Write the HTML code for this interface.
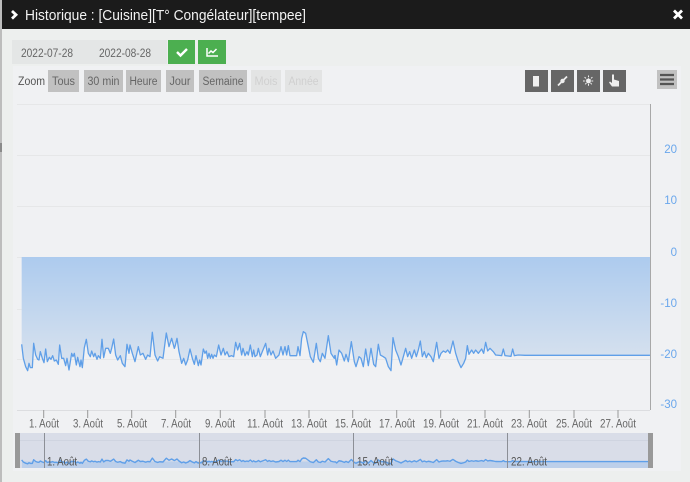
<!DOCTYPE html>
<html lang="fr">
<head>
<meta charset="utf-8">
<title>Historique</title>
<style>
html,body{margin:0;padding:0;width:690px;height:482px;overflow:hidden;background:#edefee}
svg{display:block}
text{font-family:"Liberation Sans",sans-serif}
</style>
</head>
<body>
<svg width="690" height="482" viewBox="0 0 690 482" xmlns="http://www.w3.org/2000/svg">
<defs>
<linearGradient id="g" gradientUnits="userSpaceOnUse" x1="0" y1="-204" x2="0" y2="120">
<stop offset="0" stop-color="#adcbee"/><stop offset="1" stop-color="#d8e2ee"/>
</linearGradient>
<g id="ln" fill="none" stroke="#5f9fe8" stroke-linejoin="round">
<polyline vector-effect="non-scaling-stroke" transform="translate(15,325) scale(.3333)" points="20,58 25,100 32,125 38,137 42,115 46,128 52,128 56,55 62,90 68,103 72,105 76,80 82,100 87,113 92,72 97,110 103,97 108,103 113,92 118,108 124,105 130,118 134,60 140,100 146,100 152,122 156,100 162,135 170,85 174,95 178,85 184,120 188,97 195,125 198,105 202,128 208,68 214,43 220,85 226,95 230,78 236,95 240,85 246,103 250,92 256,100 261,43 266,98 272,70 280,70 286,85 290,70 296,42 302,90 308,105 316,92 322,115 330,125 336,58 342,85 345,60 352,85 360,110 370,65 376,90 384,85 392,103 398,90 405,95 412,22 420,90 428,108 434,95 444,100 454,24 462,65 470,40 478,70 480,65"/>
<polyline vector-effect="non-scaling-stroke" transform="translate(175,325) scale(.3333)" points="0,65 6,40 12,80 20,115 26,100 32,120 38,105 45,72 52,100 58,118 63,92 70,122 74,105 78,120 85,72 90,85 94,78 98,100 102,85 106,100 110,88 114,100 118,90 124,95 131,60 138,90 145,70 150,90 156,80 162,95 170,92 176,95 182,52 188,75 194,55 200,90 204,70 210,92 216,80 220,90 226,60 232,95 236,75 240,95 246,90 250,70 256,95 262,80 272,55 278,90 282,70 288,90 294,78 302,100 312,90 318,65 324,90 330,65 335,90 340,62 345,92 365,92 369,65 375,92 380,40 385,20 392,25 400,65 406,95 415,112 424,55 430,100 436,110 442,85 450,100 460,32 468,85 478,100 480,90"/>
<polyline vector-effect="non-scaling-stroke" transform="translate(335,325) scale(.3333)" points="0,90 5,120 12,75 20,85 28,108 33,88 40,110 49,50 58,110 63,125 72,95 78,100 85,125 92,72 100,122 108,70 116,118 122,125 130,58 136,90 145,95 152,100 160,125 168,137 174,38 182,75 190,95 198,120 205,95 212,70 218,95 224,80 230,100 238,75 244,95 250,75 256,48 262,95 268,80 274,98 280,85 288,95 295,110 305,52 312,100 318,85 325,78 332,82 338,75 345,85 354,48 362,85 370,110 378,128 386,115 392,100 397,62 402,88 410,75 416,85 422,75 430,85 440,72 446,85 452,52 458,78 465,70 475,80 482,90 500,92 505,72 510,92 528,94 533,72 538,92 550,90 570,91 945,91"/>
</g>
<g id="ar" fill="url(#g)">
<polygon transform="translate(15,325) scale(.3333)" points="20,-204 20,58 25,100 32,125 38,137 42,115 46,128 52,128 56,55 62,90 68,103 72,105 76,80 82,100 87,113 92,72 97,110 103,97 108,103 113,92 118,108 124,105 130,118 134,60 140,100 146,100 152,122 156,100 162,135 170,85 174,95 178,85 184,120 188,97 195,125 198,105 202,128 208,68 214,43 220,85 226,95 230,78 236,95 240,85 246,103 250,92 256,100 261,43 266,98 272,70 280,70 286,85 290,70 296,42 302,90 308,105 316,92 322,115 330,125 336,58 342,85 345,60 352,85 360,110 370,65 376,90 384,85 392,103 398,90 405,95 412,22 420,90 428,108 434,95 444,100 454,24 462,65 470,40 478,70 480,65 481,-204"/>
<polygon transform="translate(175,325) scale(.3333)" points="0,-204 0,65 6,40 12,80 20,115 26,100 32,120 38,105 45,72 52,100 58,118 63,92 70,122 74,105 78,120 85,72 90,85 94,78 98,100 102,85 106,100 110,88 114,100 118,90 124,95 131,60 138,90 145,70 150,90 156,80 162,95 170,92 176,95 182,52 188,75 194,55 200,90 204,70 210,92 216,80 220,90 226,60 232,95 236,75 240,95 246,90 250,70 256,95 262,80 272,55 278,90 282,70 288,90 294,78 302,100 312,90 318,65 324,90 330,65 335,90 340,62 345,92 365,92 369,65 375,92 380,40 385,20 392,25 400,65 406,95 415,112 424,55 430,100 436,110 442,85 450,100 460,32 468,85 478,100 480,90 481,-204"/>
<polygon transform="translate(335,325) scale(.3333)" points="0,-204 0,90 5,120 12,75 20,85 28,108 33,88 40,110 49,50 58,110 63,125 72,95 78,100 85,125 92,72 100,122 108,70 116,118 122,125 130,58 136,90 145,95 152,100 160,125 168,137 174,38 182,75 190,95 198,120 205,95 212,70 218,95 224,80 230,100 238,75 244,95 250,75 256,48 262,95 268,80 274,98 280,85 288,95 295,110 305,52 312,100 318,85 325,78 332,82 338,75 345,85 354,48 362,85 370,110 378,128 386,115 392,100 397,62 402,88 410,75 416,85 422,75 430,85 440,72 446,85 452,52 458,78 465,70 475,80 482,90 500,92 505,72 510,92 528,94 533,72 538,92 550,90 570,91 945,91 945,-204"/>
</g>
<clipPath id="nv"><rect x="20" y="433" width="628" height="35"/></clipPath>
</defs>

<rect width="690" height="482" fill="#edefee"/>
<rect x="0" y="0" width="2" height="482" fill="#bdbdbd"/>
<rect x="0" y="143" width="2" height="9" fill="#8a8a8a"/>
<rect x="2" y="0" width="688" height="29" fill="#1b1b1b"/>
<path d="M12 11l4 3.800-4 3.800" fill="none" stroke="#fff" stroke-width="2.800"/>
<text x="25" y="20" font-size="15" fill="#f2f2f2" textLength="281" lengthAdjust="spacingAndGlyphs">Historique : [Cuisine][T° Congélateur][tempee]</text>
<path d="M674 10.500l8 8M682 10.500l-8 8" stroke="#fff" stroke-width="2.800"/>

<rect x="12" y="40" width="155" height="24" fill="#e4e6e6"/>
<text x="21" y="57" font-size="11.500" fill="#666" textLength="52" lengthAdjust="spacingAndGlyphs">2022-07-28</text>
<text x="99" y="57" font-size="11.500" fill="#666" textLength="52" lengthAdjust="spacingAndGlyphs">2022-08-28</text>
<rect x="168" y="40" width="27" height="24" fill="#4caf50"/>
<path d="M177 52l3.500 3.500 6.500-6.500" fill="none" stroke="#fff" stroke-width="2.400"/>
<rect x="198" y="40" width="28" height="24" fill="#4caf50"/>
<path d="M207 48v8h11M208.500 53.500l2.500-2.500 2 1.500 3.500-3.500" fill="none" stroke="#fff" stroke-width="1.500"/>

<rect x="13" y="66" width="668" height="405" fill="#f0f1f3"/>

<text x="18" y="85" font-size="11.500" fill="#555" textLength="27" lengthAdjust="spacingAndGlyphs">Zoom</text>
<g font-size="11.500" fill="#666">
<rect x="48" y="70" width="31" height="22" fill="#c1c1c1"/><text x="52" y="85" textLength="23" lengthAdjust="spacingAndGlyphs">Tous</text>
<rect x="84" y="70" width="39" height="22" fill="#c1c1c1"/><text x="87.500" y="85" textLength="32" lengthAdjust="spacingAndGlyphs">30 min</text>
<rect x="126" y="70" width="35" height="22" fill="#c1c1c1"/><text x="129.500" y="85" textLength="28" lengthAdjust="spacingAndGlyphs">Heure</text>
<rect x="166" y="70" width="28" height="22" fill="#c1c1c1"/><text x="169.500" y="85" textLength="21" lengthAdjust="spacingAndGlyphs">Jour</text>
<rect x="199" y="70" width="48" height="22" fill="#c1c1c1"/><text x="202.500" y="85" textLength="41" lengthAdjust="spacingAndGlyphs">Semaine</text>
<rect x="251" y="70" width="30" height="22" fill="#e3e4e4"/><text x="254.500" y="85" fill="#d0d0d0" textLength="23" lengthAdjust="spacingAndGlyphs">Mois</text>
<rect x="285" y="70" width="37" height="22" fill="#e3e4e4"/><text x="288.500" y="85" fill="#d0d0d0" textLength="30" lengthAdjust="spacingAndGlyphs">Année</text>
</g>

<g fill="#666">
<rect x="525" y="70" width="23" height="22"/><rect x="551" y="70" width="23" height="22"/><rect x="577" y="70" width="23" height="22"/><rect x="603" y="70" width="23" height="22"/>
</g>
<rect x="533" y="76" width="6" height="10.500" fill="#eee"/>
<path d="M558 85.500l9-9" stroke="#eee" stroke-width="1.800"/><circle cx="562.500" cy="81" r="2.200" fill="#eee"/>
<circle cx="588.500" cy="81" r="2.400" fill="#eee"/>
<path d="M588.500 75.500v11M583 81h11M584.600 77.100l7.800 7.800M592.400 77.100l-7.800 7.800" stroke="#eee" stroke-width="1" stroke-dasharray="1.800 1"/>
<path d="M612 74.500h2v5l5 1.500v5.500h-7l-3-4 1-1 2 1.500z" fill="#eee"/>
<rect x="657" y="70" width="20" height="19" fill="#c1c1c1"/>
<path d="M660 75h14M660 79.500h14M660 84h14" stroke="#555" stroke-width="2.200"/>

<g stroke="#e6e7e8" stroke-width="1">
<path d="M17 104.500H650M17 155.500H650M17 206.500H650M17 257.500H650M17 309.500H650M17 359.500H650"/>
</g>
<path d="M17 410.500H650" stroke="#dcdde0"/>
<use href="#ar"/>
<use href="#ln" style="stroke-width:1.300"/>
<path d="M650.500 104V410" stroke="#a8a8a8" stroke-width="1"/>

<g font-size="11.500" fill="#6aa7ec" text-anchor="end">
<text x="677" y="153">20</text><text x="677" y="204">10</text><text x="677" y="256">0</text>
<text x="677" y="307">-10</text><text x="677" y="358">-20</text><text x="677" y="408">-30</text>
</g>

<path d="M43.700 410v8M87.700 410v8M131.700 410v8M175.700 410v8M220.300 410v8M265 410v8M309 410v8M352.700 410v8M396.700 410v8M440.700 410v8M485 410v8M529.300 410v8M574 410v8M618 410v8" stroke="#999" stroke-width="1"/>
<g font-size="11.500" fill="#666" text-anchor="middle" lengthAdjust="spacingAndGlyphs">
<text x="44" y="427.500" textLength="30" lengthAdjust="spacingAndGlyphs">1. Août</text><text x="88" y="427.500" textLength="30" lengthAdjust="spacingAndGlyphs">3. Août</text><text x="132" y="427.500" textLength="30" lengthAdjust="spacingAndGlyphs">5. Août</text><text x="176" y="427.500" textLength="30" lengthAdjust="spacingAndGlyphs">7. Août</text><text x="220" y="427.500" textLength="30" lengthAdjust="spacingAndGlyphs">9. Août</text>
<text x="265" y="427.500" textLength="36" lengthAdjust="spacingAndGlyphs">11. Août</text><text x="309" y="427.500" textLength="36" lengthAdjust="spacingAndGlyphs">13. Août</text><text x="353" y="427.500" textLength="36" lengthAdjust="spacingAndGlyphs">15. Août</text><text x="397" y="427.500" textLength="36" lengthAdjust="spacingAndGlyphs">17. Août</text><text x="441" y="427.500" textLength="36" lengthAdjust="spacingAndGlyphs">19. Août</text>
<text x="485" y="427.500" textLength="36" lengthAdjust="spacingAndGlyphs">21. Août</text><text x="529" y="427.500" textLength="36" lengthAdjust="spacingAndGlyphs">23. Août</text><text x="574" y="427.500" textLength="36" lengthAdjust="spacingAndGlyphs">25. Août</text><text x="618" y="427.500" textLength="36" lengthAdjust="spacingAndGlyphs">27. Août</text>
</g>

<rect x="20" y="433" width="628" height="35" fill="#d9dde8"/>
<path d="M20 440.500H648" stroke="#cfd4e0"/>
<g clip-path="url(#nv)">
<rect x="22" y="461.500" width="626" height="6.500" fill="#bccfea"/>
<g transform="translate(0,408.250) scale(1,.15)"><use href="#ln" style="stroke-width:1.400"/></g>
</g>
<path d="M44.500 433v35M199.500 433v35M353.500 433v35M507.500 433v35" stroke="#8c8f96" stroke-width="1"/>
<g font-size="11.500" fill="#555">
<text x="47" y="465.500" textLength="30" lengthAdjust="spacingAndGlyphs">1. Août</text><text x="202" y="465.500" textLength="30" lengthAdjust="spacingAndGlyphs">8. Août</text><text x="357" y="465.500" textLength="36" lengthAdjust="spacingAndGlyphs">15. Août</text><text x="511" y="465.500" textLength="36" lengthAdjust="spacingAndGlyphs">22. Août</text>
</g>
<rect x="15" y="433" width="5" height="35" fill="#999"/>
<rect x="648" y="433" width="5" height="35" fill="#999"/>
</svg>
</body>
</html>
